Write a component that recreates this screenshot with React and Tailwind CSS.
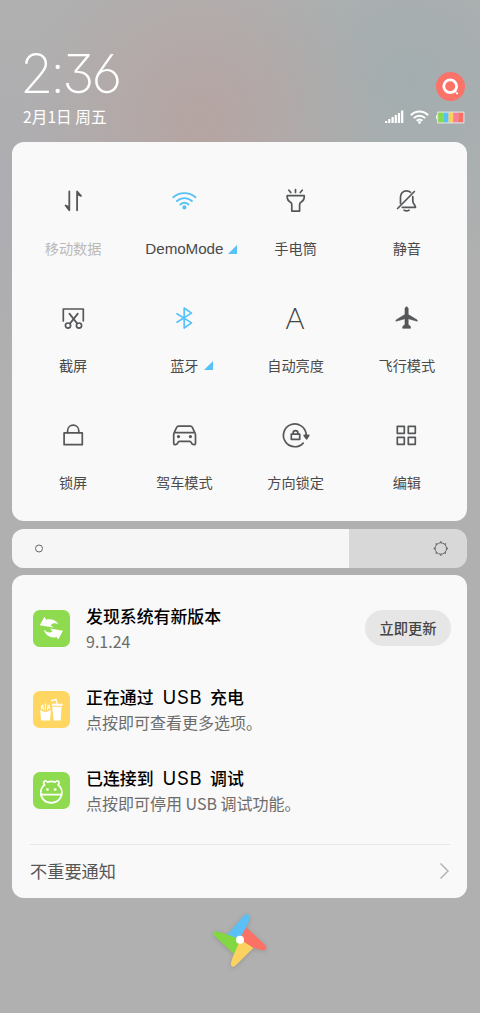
import React from 'react';

const INK = '#555759';
const BLUE = '#56c2f7';

// --- Quick toggle icons, all on a 32x32 grid ---
const Glyph = ({ children, color = INK, width = 1.7 }) => (
  <svg
    width="32"
    height="32"
    viewBox="0 0 32 32"
    fill="none"
    stroke={color}
    strokeWidth={width}
    strokeLinecap="round"
    strokeLinejoin="round"
  >
    {children}
  </svg>
);

const DataIcon = () => (
  <Glyph width={1.8}>
    <path d="M12.300 6.500v18.800l-3.700-4.800 3.700 1.800M20.100 25.300v-18.800l3.900 4.300-3.900-1.600" />
  </Glyph>
);

const WifiIcon = () => (
  <Glyph color={BLUE} width={1.9}>
    <path d="M5.300 12.200C11.400 6.800 21.400 6.800 27.500 12.200M8.900 16C13.200 12.200 19.600 12.200 23.900 16M12.300 19.500c2.400-2 5.800-2 8.200 0" />
    <circle cx="16.400" cy="22.400" r="1.100" fill={BLUE} />
  </Glyph>
);

const TorchIcon = () => (
  <Glyph>
    <path d="M9.900 5.200l1.900 2.300M16.500 4.600v2.800M23.200 5.200l-1.900 2.300" />
    <path d="M8.200 10.700h17v1.600c0 2.600-1.200 3.600-2.600 4.400-1.400.8-2 1.400-2 2.800v6.600h-7.800v-6.600c0-1.400-.7-2-2-2.800C9.400 15.900 8.200 14.900 8.200 12.300z" />
  </Glyph>
);

const MuteIcon = () => (
  <Glyph>
    <path d="M7.600 23.500L24.400 6.500" />
    <path d="M10.500 18.500v-6.500c0-3.600 2.600-6.200 6-6.200 1.700 0 3 .5 4.100 1.500M22.800 11.500v4.800c0 2.400 2.700 4 2.700 6H12.300M14.200 25.200c1.400.8 3.400.8 4.800 0" />
  </Glyph>
);

const ScreenshotIcon = () => (
  <Glyph>
    <path d="M6.300 19V7h20v11.800" />
    <path d="M12.400 11.600l7.700 9.800M20.800 11.600l-7.700 9.800" />
    <circle cx="11" cy="23.600" r="2.600" />
    <circle cx="22" cy="23.600" r="2.600" />
  </Glyph>
);

const BluetoothIcon = () => (
  <Glyph color={BLUE}>
    <path d="M9 11.800L23.500 20.900 16.200 26V6l7.300 5.100L9 20.200" />
  </Glyph>
);

const AutoIcon = () => (
  <span className="h-8 font-['Lato',sans-serif] text-[29px] font-light leading-[32px] text-[#444]">A</span>
);

const PlaneIcon = () => (
  <Glyph width={0.6}>
    <path
      fill={INK}
      d="M16.600 5c1 0 1.600.8 1.600 1.800v5.700l8.600 5.200c.5.300.6.900.5 1.500l-9.100-2.500v5.700l2.300 2.200v1.700h-7.800v-1.700l2.300-2.200v-5.700l-9.100 2.500c-.1-.6 0-1.200.5-1.500l8.600-5.200V6.800C15 5.800 15.600 5 16.600 5z"
    />
  </Glyph>
);

const LockIcon = () => (
  <Glyph>
    <rect x="7.100" y="13.900" width="18.200" height="11.800" />
    <path d="M10.600 13.700v-2c0-3.200 2.500-5.500 5.600-5.500s5.600 2.300 5.600 5.500v2" />
  </Glyph>
);

const CarIcon = () => (
  <Glyph>
    <path d="M6.200 13.600L8.800 8.200c.4-.8.900-1.100 1.700-1.100h12c.8 0 1.300.3 1.700 1.100l2.600 5.400M6.200 13.600h20.600c.5.900.7 1.700.7 2.700v7.600c0 1.200-.6 1.700-1.700 1.700-1.900 0-2.200-.6-2.600-2-.2-.9-.7-1.200-1.500-1.200H11.500c-.8 0-1.300.3-1.500 1.200-.4 1.400-.7 2-2.600 2-1.100 0-1.700-.5-1.700-1.700v-7.600c0-1 0-1.800.5-2.700z" />
    <circle cx="10.500" cy="17.600" r=".8" fill={INK} />
    <circle cx="22.400" cy="17.600" r=".8" fill={INK} />
  </Glyph>
);

const RotateLockIcon = () => (
  <Glyph>
    <path d="M24.200 24.100A11.400 11.400 0 1 1 27.200 15.500" />
    <path d="M25.200 16.400h4.600l-2.200 3.400z" fill={INK} />
    <rect x="12.300" y="15.100" width="8.400" height="5.200" />
    <path d="M14.100 15v-1c0-1.400 1-2.400 2.400-2.400s2.400 1 2.400 2.400v1" />
  </Glyph>
);

const EditIcon = () => (
  <Glyph>
    <rect x="7.300" y="7.300" width="7" height="7" />
    <rect x="18.300" y="7.300" width="7" height="7" />
    <rect x="7.300" y="18.300" width="7" height="7" />
    <rect x="18.300" y="18.300" width="7" height="7" />
  </Glyph>
);

const toggles = [
  { label: '移动数据', icon: DataIcon, muted: true },
  { label: 'DemoMode', icon: WifiIcon, more: true },
  { label: '手电筒', icon: TorchIcon },
  { label: '静音', icon: MuteIcon },
  { label: '截屏', icon: ScreenshotIcon },
  { label: '蓝牙', icon: BluetoothIcon, more: true },
  { label: '自动亮度', icon: AutoIcon },
  { label: '飞行模式', icon: PlaneIcon },
  { label: '锁屏', icon: LockIcon },
  { label: '驾车模式', icon: CarIcon },
  { label: '方向锁定', icon: RotateLockIcon },
  { label: '编辑', icon: EditIcon },
];

const Toggle = ({ label, icon: Icon, muted, more }) => (
  <button className="flex h-[117px] flex-col items-center">
    <Icon />
    <span
      className={`relative mt-[21px] whitespace-nowrap pl-px leading-5 ${muted ? 'text-[#b9b9b9]' : 'text-[#4a4a4a]'} ${label === 'DemoMode' ? "pt-px font-['Liberation_Sans'] text-[15.200px] tracking-[-0.050px]" : 'text-[14.200px]'}`}
    >
      {label}
      {more && (
        <svg className="absolute -right-[14px] bottom-[5px]" width="9" height="9" viewBox="0 0 9 9">
          <path d="M9 0v9H0z" fill={BLUE} />
        </svg>
      )}
    </span>
  </button>
);

// --- Status bar ---
const StatusIcons = () => (
  <div className="flex items-center">
    <svg width="19" height="14" viewBox="0 0 19 14" fill="#fff">
      <rect x="0" y="11" width="2.200" height="2" />
      <rect x="3.200" y="9" width="2.200" height="4" />
      <rect x="6.500" y="7" width="2.200" height="6" />
      <rect x="9.700" y="5" width="2.200" height="8" />
      <rect x="12.900" y="3" width="2.200" height="10" />
      <rect x="16.100" y="0.500" width="2.200" height="12.500" />
    </svg>
    <svg className="ml-[6px]" width="19" height="14" viewBox="0 0 19 14" fill="none" stroke="#fff" strokeWidth="2">
      <path d="M.8 5.200C5.700.2 13.300.2 18.200 5.200M3.800 8.100c3.200-3.100 8.200-3.100 11.400 0M6.600 10.700c1.700-1.500 4.100-1.500 5.800 0" />
      <circle cx="9.500" cy="12.400" r="1.100" fill="#fff" strokeWidth=".8" />
    </svg>
    <svg className="ml-[7px]" width="29" height="13" viewBox="0 0 29 13">
      <rect x="0" y="4.200" width="1.500" height="4" fill="#eee" />
      <rect x="1" y=".5" width="27.500" height="12" rx="1" fill="#dedede" />
      <rect x="2.200" y="1.700" width="5.200" height="9.600" fill="#87d94b" />
      <rect x="7.400" y="1.700" width="5.200" height="9.600" fill="#56c2f7" />
      <rect x="12.600" y="1.700" width="4.600" height="9.600" fill="#fdd05a" />
      <rect x="17.200" y="1.700" width="5" height="9.600" fill="#f77f9e" />
      <rect x="22.200" y="1.700" width="5.100" height="9.600" fill="#fb6f64" />
    </svg>
  </div>
);

const Header = () => (
  <header className="flex h-[142px] items-end justify-between pb-[14px] pl-[23px] pr-[15px] text-white">
    <div className="flex flex-col">
      <span className="-ml-[3px] whitespace-nowrap font-['Inter'] text-[54px] font-extralight leading-[54px] tracking-[-3px] [font-feature-settings:'ss01','cv09']">
        2:36
      </span>
      <span className="mt-[5px] whitespace-nowrap text-[15.700px] leading-[22px]">2月1日 周五</span>
    </div>
    <div className="flex flex-col items-end">
      <svg className="mb-[9px]" width="29" height="29" viewBox="0 0 29 29">
        <circle cx="14.500" cy="14.500" r="14.500" fill="#fa7268" />
        <circle cx="14.200" cy="14.200" r="6.400" fill="none" stroke="#fff" strokeWidth="2.800" />
        <path d="M18 18l2 2" stroke="#fff" strokeWidth="2.600" />
        <circle cx="21" cy="21.300" r="1.100" fill="#fff" />
      </svg>
      <div className="mb-[4px]">
        <StatusIcons />
      </div>
    </div>
  </header>
);

// --- Brightness ---
const BrightnessSlider = () => (
  <div className="mt-2 flex h-[39px] overflow-hidden rounded-[12px] bg-[#d8d8d8]">
    <div className="flex w-[337px] items-center bg-[#f6f6f6] pl-[22px]">
      <svg width="10" height="9" viewBox="0 0 10 9" fill="none" stroke="#666">
        <circle cx="5" cy="4.500" r="3.500" />
      </svg>
    </div>
    <div className="flex flex-1 items-center justify-end pr-[19px]">
      <svg width="15" height="15" viewBox="0 0 15 15" fill="none" stroke="#666">
        <circle cx="7.800" cy="7.500" r="5.700" />
        <g strokeWidth="1.400">
          <path d="M7.800.3v1.500M7.800 13.200v1.500M.6 7.500h1.500M13.500 7.500h1.500M2.700 2.400l1.100 1.100M11.800 11.500l1.100 1.100M12.900 2.400l-1.100 1.100M3.800 11.500l-1.100 1.100" />
        </g>
      </svg>
    </div>
  </div>
);

// --- Notifications ---
const UpdateIcon = () => (
  <svg width="37" height="37" viewBox="0 0 110 110">
    <rect width="110" height="110" rx="20" fill="#8fdb50" />
    <path
      fill="#fff"
      d="M20 45L34 20l5 9c14-4 29 1 37 13-10-4-19-3-23 3l8 7zM89 62L75 88l-5-8c-15 5-31-1-38-21 9 8 18 10 26 5l-7-9z"
    />
  </svg>
);

const ChargeIcon = () => (
  <svg width="37" height="37" viewBox="0 0 110 110">
    <rect width="110" height="110" rx="20" fill="#ffd661" />
    <g fill="#fff">
      <path d="M21 55c8 9 24 9 32 0l-2 33H24z" />
      <path d="M57 47h28l-3 41H61zM56 38h32v6H56z" />
    </g>
    <path
      d="M26 53l-1-10M31 56l-2-16M37 57V37M43 56l2-16M48 53l1-10"
      fill="none"
      stroke="#fff"
      strokeWidth="3.500"
    />
    <path d="M54 29l14-4 4 14" fill="none" stroke="#fff" strokeWidth="4" />
  </svg>
);

const DebugIcon = () => (
  <svg width="37" height="37" viewBox="0 0 110 110">
    <rect width="110" height="110" rx="20" fill="#8fdb50" />
    <path
      d="M34 38c-7-9 3-16 9-8 8-3 15-3 23 0 6-8 16-1 9 8 7 6 11 14 11 23 0 17-14 31-32 31S23 78 23 61c0-9 4-17 11-23zM24 67h61"
      fill="none"
      stroke="#fff"
      strokeWidth="5"
    />
    <circle cx="43" cy="52" r="4" fill="#fff" />
    <circle cx="66" cy="52" r="4" fill="#fff" />
  </svg>
);

const Latin = ({ children }) => (
  <span className="ml-[9px] mr-[8px] font-['Inter'] text-[18.500px] font-normal leading-none tracking-[0.600px]">
    {children}
  </span>
);

const notifications = [
  { icon: UpdateIcon, title: '发现系统有新版本', text: '9.1.24', action: '立即更新' },
  { icon: ChargeIcon, title: <>正在通过<Latin>USB</Latin>充电</>, text: '点按即可查看更多选项。' },
  { icon: DebugIcon, title: <>已连接到<Latin>USB</Latin>调试</>, text: '点按即可停用 USB 调试功能。' },
];

const Notification = ({ icon: Icon, title, text, action }) => (
  <div className="flex h-[81px] items-center">
    <Icon />
    <div className="ml-4 flex-1 whitespace-nowrap">
      <p className="text-[16.900px] font-medium leading-[26px] text-black">{title}</p>
      <p className="-mt-px text-[16px] leading-[26px] text-[#6c6c6c]">{text}</p>
    </div>
    {action && (
      <button className="mb-px h-9 w-[86px] rounded-full bg-[#e6e6e6] text-[14.300px] font-medium text-[#444]">
        {action}
      </button>
    )}
  </div>
);

const Pinwheel = () => (
  <svg className="mx-auto mt-3 drop-shadow-sm" width="60" height="60" viewBox="30 60 180 180">
    <path d="M82 134L131 77c7-8 20-4 18 6-2 9-6 19-11 29L122 150z" fill="#5bc0f5" />
    <path d="M138 112l57 52c9 9 2 19-9 16-9-2-17-4-26-7L118 150z" fill="#fb7165" />
    <path d="M160 174l-54 53c-7 7-16 2-13-8 2-9 5-18 9-28L120 147z" fill="#fbd25f" />
    <path d="M102 192L43 137c-7-8 0-15 9-12 10 2 20 5 31 9L122 148z" fill="#83d743" />
    <circle cx="120" cy="149" r="12" fill="#fff" />
  </svg>
);

const App = () => (
  <div className="flex h-[1013px] w-[480px] flex-col overflow-hidden bg-[#b0b0b0] bg-[radial-gradient(circle_at_200px_120px,#b5a4a2_0px,transparent_180px),radial-gradient(circle_at_410px_80px,#a3adaf_0px,transparent_200px),radial-gradient(circle_at_0px_200px,#adadb2_0px,transparent_180px)] font-['Noto_Sans_CJK_SC',sans-serif]">
    <Header />

    <main className="pl-[12px] pr-[13px]">
      <section className="grid h-[379px] grid-cols-4 content-start rounded-[12px] bg-[#f9f9f9] px-[5px] pt-[43px]">
        {toggles.map((item) => (
          <Toggle key={item.label} {...item} />
        ))}
      </section>

      <BrightnessSlider />

      <section className="mt-[7px] flex h-[323px] flex-col rounded-[12px] bg-[#f9f9f9] pt-[13px]">
        <div className="pl-[21px] pr-4">
          {notifications.map((item) => (
            <Notification key={item.text} {...item} />
          ))}
        </div>
        <div className="ml-[18px] mr-[17px] mt-[13px] flex flex-1 items-center justify-between border-t border-[#e6e6e6] pb-px text-[17.200px] text-[#555]">
          <span>不重要通知</span>
          <svg width="11" height="18" viewBox="0 0 11 18" fill="none" stroke="#b5b5b5" strokeWidth="1.500">
            <path d="M1.500 1.500L9 9l-7.500 7.500" />
          </svg>
        </div>
      </section>
    </main>

    <Pinwheel />
  </div>
);

export default App;
